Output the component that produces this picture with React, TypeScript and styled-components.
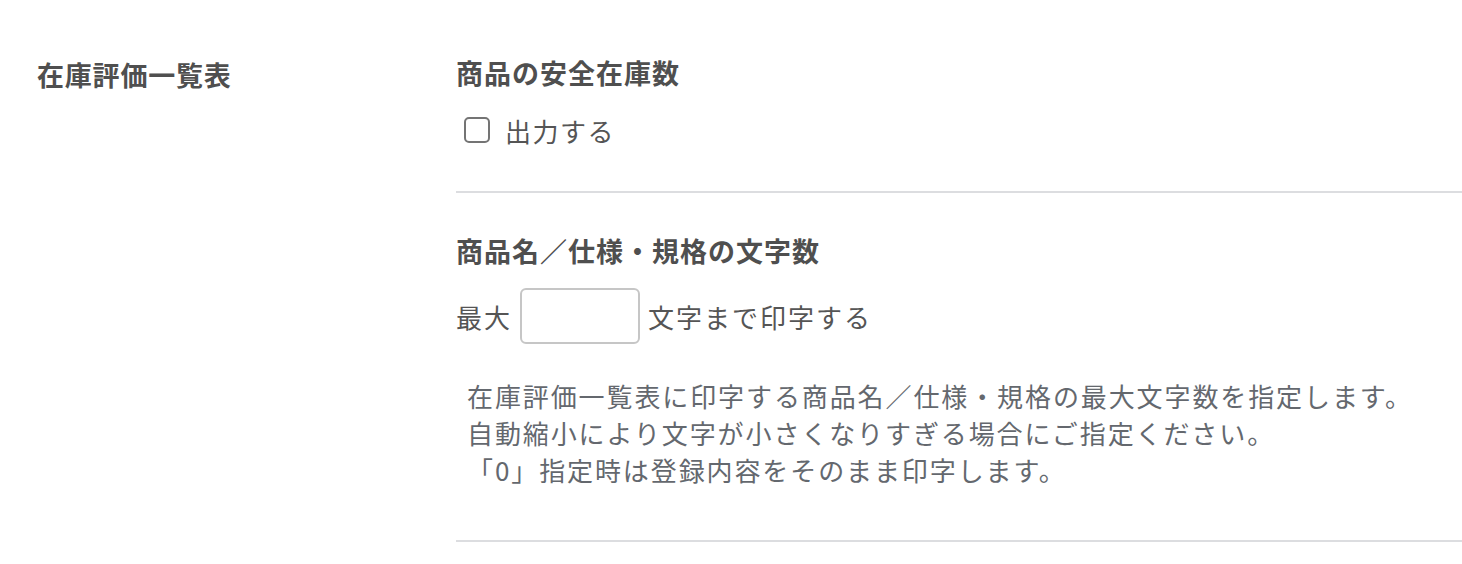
import React from "react";
import styled, { createGlobalStyle } from "styled-components";

const GlobalStyle = createGlobalStyle`
  html, body {
    margin: 0;
    padding: 0;
    background: #ffffff;
  }
  body {
    font-family: "Noto Sans CJK JP", "Noto Sans", sans-serif;
    color: #555555;
  }
`;

const Page = styled.div`
  display: grid;
  grid-template-columns: 419px 1fr;
  padding-left: 37px;
  width: 1462px;
  box-sizing: border-box;
`;

const SideLabel = styled.div`
  padding-top: 55px;
  font-size: 27px;
  line-height: 40px;
  font-weight: 700;
  letter-spacing: 0.8px;
  color: #4f4f4f;
`;

const Content = styled.div`
  display: flex;
  flex-direction: column;
`;

const Section = styled.section<{ $top: number; $bottom: number }>`
  padding-top: ${(p) => p.$top}px;
  padding-bottom: ${(p) => p.$bottom}px;
  border-bottom: 2px solid #dcdde0;
`;

const Heading = styled.h3`
  margin: 0;
  font-size: 27px;
  line-height: 40px;
  font-weight: 700;
  letter-spacing: 1px;
  color: #4f4f4f;
`;

const CheckRow = styled.label`
  display: flex;
  align-items: center;
  gap: 15px;
  margin-top: 24px;
  margin-left: 8px;
  height: 26px;
  font-size: 26px;
  letter-spacing: 1.5px;
  color: #555555;
`;

const Checkbox = styled.input`
  appearance: none;
  margin: 0;
  width: 26px;
  height: 26px;
  box-sizing: border-box;
  border: 2px solid #747474;
  border-radius: 5px;
  background: #ffffff;
`;

const InputRow = styled.div`
  display: flex;
  align-items: center;
  gap: 8px;
  margin-top: 17px;
  font-size: 26px;
  letter-spacing: 2px;
  color: #555555;
`;

const NumberBox = styled.input`
  width: 120px;
  height: 56px;
  box-sizing: border-box;
  margin: 0;
  padding: 0 10px;
  border: 2px solid #c6c6c6;
  border-radius: 6px;
  background: #ffffff;
  font-size: 26px;
  font-family: inherit;
  outline: none;
`;

const Note = styled.p`
  margin: 33px 0 0 11px;
  font-size: 26px;
  line-height: 37px;
  letter-spacing: 1.9px;
  color: #64686e;
`;

export default function App() {
  return (
    <>
      <GlobalStyle />
      <Page>
        <SideLabel>在庫評価一覧表</SideLabel>
        <Content>
          <Section $top={53} $bottom={48}>
            <Heading>商品の安全在庫数</Heading>
            <CheckRow>
              <Checkbox type="checkbox" />
              <span>出力する</span>
            </CheckRow>
          </Section>
          <Section $top={38} $bottom={52}>
            <Heading>商品名／仕様・規格の文字数</Heading>
            <InputRow>
              <span>最大</span>
              <NumberBox type="text" />
              <span>文字まで印字する</span>
            </InputRow>
            <Note>
              在庫評価一覧表に印字する商品名／仕様・規格の最大文字数を指定します。
              <br />
              自動縮小により文字が小さくなりすぎる場合にご指定ください。
              <br />
              「0」指定時は登録内容をそのまま印字します。
            </Note>
          </Section>
        </Content>
      </Page>
    </>
  );
}
